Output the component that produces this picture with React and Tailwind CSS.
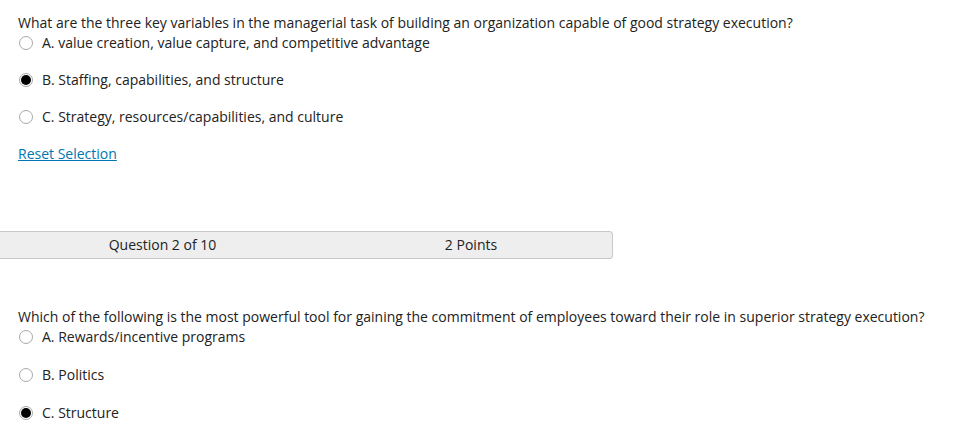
import React from 'react';

const Radio = ({ checked }) => (
  <span className="w-[14px] h-[14px] rounded-full border border-[#a9a9a9] bg-white flex items-center justify-center shrink-0">
    {checked && <span className="w-[10px] h-[10px] rounded-full bg-black" />}
  </span>
);

const Option = ({ label, checked }) => (
  <div className="flex items-center h-5 pl-px gap-[9px]">
    <Radio checked={checked} />
    <span>{label}</span>
  </div>
);

const Question = ({ text, options, gap = 'gap-[17px]' }) => (
  <div>
    <div className="h-5 leading-5">{text}</div>
    <div className={`flex flex-col ${gap}`}>
      {options.map((o) => (
        <Option key={o.label} label={o.label} checked={o.checked} />
      ))}
    </div>
  </div>
);

export default function App() {
  return (
    <div className="bg-white w-[978px] h-[431px] overflow-hidden text-[14px] text-[#222] leading-5" style={{ fontFamily: '"Open Sans", sans-serif' }}>
      <div className="pl-[18px] pt-[13px]">
        <Question
          text="What are the three key variables in the managerial task of building an organization capable of good strategy execution?"
          options={[
            { label: 'A. value creation, value capture, and competitive advantage' },
            { label: 'B. Staffing, capabilities, and structure', checked: true },
            { label: 'C. Strategy, resources/capabilities, and culture' },
          ]}
        />
        <div className="mt-[17px] h-5">
          <a href="#" className="text-[#0077b3] underline">Reset Selection</a>
        </div>
      </div>

      <div className="mt-[67px] w-[613px] h-[28px] flex items-center bg-[#eeeeee] border border-l-0 border-[#c8c8c8] rounded-r-[4px]">
        <div className="w-[325px] shrink-0 text-center">Question 2 of 10</div>
        <div className="w-[292px] shrink-0 text-center">2 Points</div>
      </div>

      <div className="pl-[18px] pt-[48px]">
        <Question
          text="Which of the following is the most powerful tool for gaining the commitment of employees toward their role in superior strategy execution?"
          gap="gap-[18px]"
          options={[
            { label: 'A. Rewards/incentive programs' },
            { label: 'B. Politics' },
            { label: 'C. Structure', checked: true },
          ]}
        />
      </div>
    </div>
  );
}
